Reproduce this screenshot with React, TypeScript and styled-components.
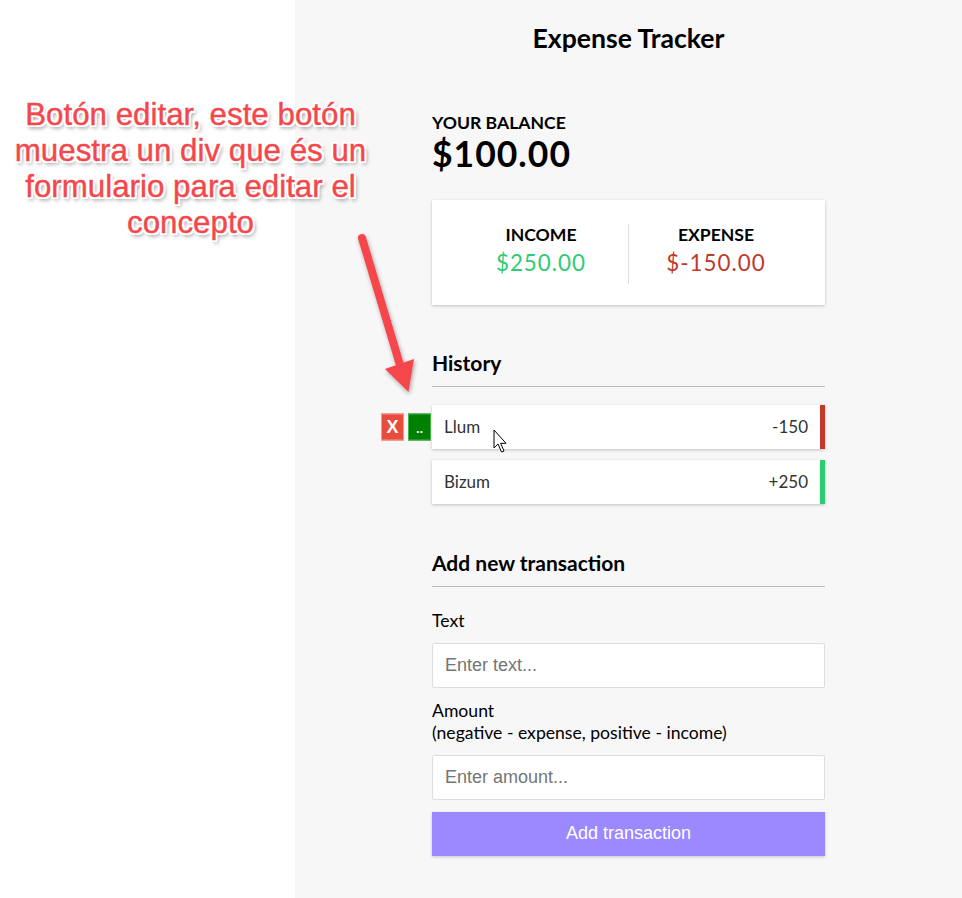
import React from "react";
import styled, { createGlobalStyle } from "styled-components";

const GlobalStyle = createGlobalStyle`
  * { box-sizing: border-box; }
  html, body { margin: 0; padding: 0; }
  body { font-family: Lato, "Noto Sans", sans-serif; background: #ffffff; }
`;

const Page = styled.div`
  position: relative;
  display: grid;
  grid-template-columns: 295px 1fr;
  min-height: 898px;
  overflow: hidden;
`;

const LeftPane = styled.div`
  background: #ffffff;
`;

const AppPane = styled.main`
  background: #f7f7f7;
  display: flex;
  flex-direction: column;
  align-items: center;
`;

const Title = styled.h2`
  margin: 23px 0 0;
  font-size: 26.6px;
  line-height: 1.2;
  font-weight: 700;
  color: #000;
`;

const Container = styled.div`
  width: 393px;
  margin-top: 57px;
  display: flex;
  flex-direction: column;
`;

const SmallHead = styled.h4`
  margin: 0;
  font-size: 17.6px;
  line-height: 1.2;
  font-weight: 700;
  text-transform: uppercase;
  color: #000;
`;

const Balance = styled.h1`
  margin: 0;
  font-size: 35.5px;
  line-height: 1.2;
  font-weight: 700;
  letter-spacing: 1px;
  color: #000;
`;

const IncExp = styled.div`
  margin-top: 24px;
  background: #fff;
  box-shadow: 0 1px 3px rgba(0, 0, 0, 0.22);
  padding: 24px 22px 21px;
  display: flex;
`;

const IncExpCol = styled.div<{ $divider?: boolean }>`
  flex: 1;
  text-align: center;
  ${(p) => (p.$divider ? "border-right: 1px solid #dedede;" : "")}
`;

const Money = styled.p<{ $plus?: boolean }>`
  margin: 5px 0 7px;
  font-size: 22.4px;
  line-height: 1.2;
  letter-spacing: 1px;
  color: ${(p) => (p.$plus ? "#2ecc71" : "#c0392b")};
`;

const SectionHead = styled.h3<{ $top: number }>`
  margin: ${(p) => p.$top}px 0 0;
  font-size: 21px;
  line-height: 1.2;
  font-weight: 700;
  color: #000;
  padding-bottom: 11px;
  border-bottom: 1px solid #bbb;
`;

const List = styled.ul`
  list-style: none;
  margin: 18px 0 0;
  padding: 0;
  display: flex;
  flex-direction: column;
  gap: 11px;
`;

const Item = styled.li<{ $plus?: boolean }>`
  position: relative;
  height: 44px;
  background: #fff;
  color: #333;
  font-size: 17px;
  display: flex;
  justify-content: space-between;
  align-items: center;
  padding: 0 12px;
  border-right: 5px solid ${(p) => (p.$plus ? "#2ecc71" : "#c0392b")};
  box-shadow: 0 1px 3px rgba(0, 0, 0, 0.22);
`;

const ItemActions = styled.div`
  position: absolute;
  right: 100%;
  top: 50%;
  transform: translateY(-50%);
  margin-right: 1px;
  display: flex;
  gap: 4px;
`;

const ActionBtn = styled.button<{ $kind: "del" | "edit" }>`
  width: 23px;
  height: 27px;
  padding: 0;
  border: 1px solid ${(p) => (p.$kind === "del" ? "#f29a90" : "#4caf50")};
  background: ${(p) => (p.$kind === "del" ? "#e74c3c" : "#008000")};
  color: #fff;
  font-family: Arial, "Liberation Sans", sans-serif;
  font-weight: 700;
  font-size: ${(p) => (p.$kind === "del" ? "18px" : "13px")};
  line-height: 1;
  display: flex;
  align-items: ${(p) => (p.$kind === "del" ? "center" : "flex-end")};
  justify-content: center;
  padding-bottom: ${(p) => (p.$kind === "del" ? "0" : "5px")};
`;

const Label = styled.label`
  display: block;
  font-size: 17.6px;
  line-height: 22px;
  color: #000;
  margin-bottom: 11px;
`;

const FormControl = styled.div<{ $top: number }>`
  margin-top: ${(p) => p.$top}px;
`;

const Input = styled.input`
  display: block;
  width: 100%;
  height: 45px;
  border: 1px solid #dedede;
  border-radius: 2px;
  background: #fff;
  padding: 0 12px;
  font-family: Arial, "Liberation Sans", sans-serif;
  font-size: 18px;
  &::placeholder { color: #757575; }
`;

const SubmitBtn = styled.button`
  display: block;
  width: 100%;
  height: 44px;
  margin-top: 12px;
  border: none;
  background: #9c88ff;
  color: #fff;
  font-family: Arial, "Liberation Sans", sans-serif;
  font-size: 18px;
  box-shadow: 0 1px 3px rgba(0, 0, 0, 0.2);
`;

const Note = styled.div`
  position: absolute;
  left: 0;
  top: 97px;
  width: 381px;
  text-align: center;
  font-family: Arial, "Liberation Sans", sans-serif;
  font-size: 31.3px;
  line-height: 36px;
  color: #f5474b;
  -webkit-text-stroke: 0.4px #f5474b;
  text-shadow:
    -2px -2px 0 #fff, 2px -2px 0 #fff, -2px 2px 0 #fff, 2px 2px 0 #fff,
    0 -2px 0 #fff, 0 2px 0 #fff, -2px 0 0 #fff, 2px 0 0 #fff,
    2px 3px 4px rgba(0, 0, 0, 0.55);
`;

const ArrowSvg = styled.svg`
  position: absolute;
  left: 340px;
  top: 225px;
  overflow: visible;
`;

const CursorSvg = styled.svg`
  position: absolute;
  left: 493px;
  top: 429px;
`;

export default function App() {
  return (
    <>
      <GlobalStyle />
      <Page>
        <LeftPane />
        <AppPane>
          <Title>Expense Tracker</Title>
          <Container>
            <SmallHead>Your Balance</SmallHead>
            <Balance>$100.00</Balance>
            <IncExp>
              <IncExpCol $divider>
                <SmallHead>Income</SmallHead>
                <Money $plus>$250.00</Money>
              </IncExpCol>
              <IncExpCol>
                <SmallHead>Expense</SmallHead>
                <Money>$-150.00</Money>
              </IncExpCol>
            </IncExp>

            <SectionHead $top={45}>History</SectionHead>
            <List>
              <Item>
                <ItemActions>
                  <ActionBtn $kind="del">X</ActionBtn>
                  <ActionBtn $kind="edit">..</ActionBtn>
                </ItemActions>
                Llum <span>-150</span>
              </Item>
              <Item $plus>
                Bizum <span>+250</span>
              </Item>
            </List>

            <SectionHead $top={46}>Add new transaction</SectionHead>
            <form onSubmit={(e) => e.preventDefault()}>
              <FormControl $top={23}>
                <Label htmlFor="text">Text</Label>
                <Input id="text" type="text" placeholder="Enter text..." />
              </FormControl>
              <FormControl $top={12}>
                <Label htmlFor="amount">
                  Amount
                  <br />
                  (negative - expense, positive - income)
                </Label>
                <Input id="amount" type="number" placeholder="Enter amount..." />
              </FormControl>
              <SubmitBtn type="submit">Add transaction</SubmitBtn>
            </form>
          </Container>
        </AppPane>

        <Note>
          Botón editar, este botón
          <br />
          muestra un div que és un
          <br />
          formulario para editar el
          <br />
          concepto
        </Note>

        <ArrowSvg width="110" height="230" viewBox="0 0 110 230">
          <defs>
            <filter id="sh" x="-50%" y="-20%" width="200%" height="140%">
              <feDropShadow dx="1" dy="2" stdDeviation="2" floodColor="#000" floodOpacity="0.35" />
            </filter>
          </defs>
          <g filter="url(#sh)">
            <line x1="22" y1="13" x2="60" y2="140" stroke="#f5474b" strokeWidth="8" strokeLinecap="round" />
            <polygon points="45,144 74,134 68.5,167" fill="#f5474b" />
          </g>
        </ArrowSvg>

        <CursorSvg width="16" height="26" viewBox="0 0 16 26">
          <path
            d="M1 1 L1 19 L5 15 L8.5 23 L11 22 L7.6 14.3 L13 14.3 Z"
            fill="#fff"
            stroke="#000"
            strokeWidth="1"
            strokeLinejoin="round"
          />
        </CursorSvg>
      </Page>
    </>
  );
}
